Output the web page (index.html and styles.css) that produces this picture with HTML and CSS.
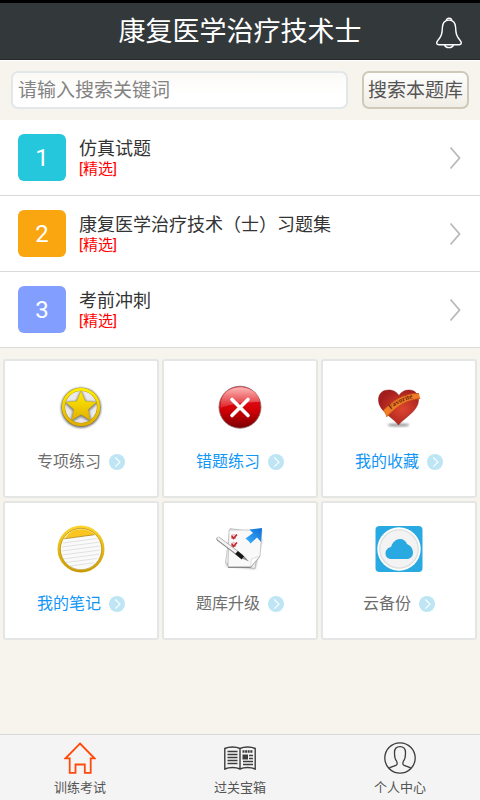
FILE: index.html
```html
<!DOCTYPE html>
<html lang="zh-CN">
<head>
<meta charset="utf-8">
<meta name="viewport" content="width=device-width, initial-scale=1">
<title>康复医学治疗技术士</title>
<link rel="stylesheet" href="styles.css">
</head>
<body>
<svg class="defs" aria-hidden="true">
  <defs>
    <linearGradient id="gold" x1="0" y1="0" x2="0" y2="1"><stop offset="0" stop-color="#fff000"/><stop offset="1" stop-color="#e2ae00"/></linearGradient>
    <linearGradient id="rim" x1="0" y1="0" x2="0" y2="1"><stop offset="0" stop-color="#ffd52e"/><stop offset="1" stop-color="#c99a00"/></linearGradient>
    <linearGradient id="red" x1="0" y1="0" x2="0" y2="1"><stop offset="0" stop-color="#e8202a"/><stop offset=".55" stop-color="#d40007"/><stop offset="1" stop-color="#7c0002"/></linearGradient>
    <linearGradient id="gloss" x1="0" y1="0" x2="0" y2="1"><stop offset="0" stop-color="#ffb5b5"/><stop offset="1" stop-color="#dc2026"/></linearGradient>
    <radialGradient id="heart" cx=".6" cy=".55" r=".6"><stop offset="0" stop-color="#dc4630"/><stop offset="1" stop-color="#a31d1c"/></radialGradient>
    <linearGradient id="blue" x1="0" y1="1" x2="1" y2="0"><stop offset="0" stop-color="#3fb0ff"/><stop offset="1" stop-color="#0c6fd4"/></linearGradient>
    <filter id="soft" x="-30%" y="-30%" width="160%" height="160%"><feGaussianBlur stdDeviation="1.3"/></filter>
    <symbol id="go" viewBox="0 0 16 16"><circle cx="8" cy="8" r="8" fill="#bde5f3"/><path d="M6.3 3.5 11 8.2 6.3 12.7" fill="none" stroke="#fff" stroke-width="1.1"/></symbol>
    <symbol id="chevron" viewBox="0 0 12 24"><path d="M1.5 1.5 10.5 12 1.5 22.5" fill="none" stroke="#b9b9b9" stroke-width="1.8"/></symbol>
  </defs>
</svg>

<header class="topbar">
  <h1 class="topbar-title">康复医学治疗技术士</h1>
  <button class="bell" type="button" aria-label="通知">
    <svg width="28" height="32" viewBox="0 0 28 32" fill="none" stroke="#fff" stroke-width="1.4">
      <path d="M14 3.1C9.8 3.1 7.6 6 7.4 10.3C7.2 16.500 6.600 19.200 3 23.200C.6 26 1.700 27.700 4 27.700H24C26.300 27.700 27.400 26 25 23.200C21.400 19.200 20.800 16.500 20.600 10.300C20.400 6 18.200 3.100 14 3.100Z"/>
      <path d="M11.300 3.500C11.300.4 16.700.4 16.700 3.500M9.500 28C10.500 31.500 17.500 31.500 18.500 28"/>
    </svg>
  </button>
</header>

<form class="search">
  <input class="search-input" type="search" placeholder="请输入搜索关键词" aria-label="请输入搜索关键词">
  <button class="search-button" type="button">搜索本题库</button>
</form>

<main>
  <ul class="list">
    <li><a class="row" href="#">
      <span class="badge badge-cyan">1</span>
      <span class="row-text"><span class="row-title">仿真试题</span><span class="row-tag">[精选]</span></span>
      <svg class="chevron"><use href="#chevron"/></svg>
    </a></li>
    <li><a class="row" href="#">
      <span class="badge badge-orange">2</span>
      <span class="row-text"><span class="row-title">康复医学治疗技术（士）习题集</span><span class="row-tag">[精选]</span></span>
      <svg class="chevron"><use href="#chevron"/></svg>
    </a></li>
    <li><a class="row" href="#">
      <span class="badge badge-violet">3</span>
      <span class="row-text"><span class="row-title">考前冲刺</span><span class="row-tag">[精选]</span></span>
      <svg class="chevron"><use href="#chevron"/></svg>
    </a></li>
  </ul>

  <div class="grid">
    <a class="card" href="#">
      <svg class="card-icon" viewBox="0 0 48 48">
        <circle cx="24" cy="24.800" r="20" fill="#444" opacity=".8" filter="url(#soft)"/>
        <circle cx="24" cy="24" r="18" fill="#e9e9ee"/>
        <path d="M24 10.500 28 19.500 38 20.500 30.500 27.300 32.700 37 24 32 15.300 37 17.500 27.300 10 20.500 20 19.500Z" fill="#333" stroke="#444" stroke-width="3" opacity=".65" filter="url(#soft)"/>
        <circle cx="24" cy="24" r="17.600" fill="none" stroke="#a98500" stroke-width="3.400"/>
        <circle cx="24" cy="24" r="17.700" fill="none" stroke="url(#gold)" stroke-width="2.800"/>
        <path d="M24 8 28.300 18.200 39.300 19.200 31 26.500 33.500 37.300 24 31.600 14.500 37.300 17 26.500 8.700 19.200 19.700 18.200Z" fill="url(#gold)" stroke="#d0a800" stroke-width=".4"/>
      </svg>
      <span class="card-label">专项练习<svg class="go"><use href="#go"/></svg></span>
    </a>
    <a class="card card-active" href="#">
      <svg class="card-icon" viewBox="0 0 48 48">
        <circle cx="24" cy="24.200" r="21" fill="url(#red)" stroke="#85686a" stroke-width=".8"/>
        <path d="M4.500 23C4.500 11 13 4.300 24 4.300S43.500 11 43.500 19C34 19 17 20 4.500 25Z" fill="url(#gloss)"/>
        <path d="M16 16.500 32 32.500M32 16.500 16 32.500" stroke="#fff" stroke-width="3.600" stroke-linecap="round"/>
      </svg>
      <span class="card-label">错题练习<svg class="go"><use href="#go"/></svg></span>
    </a>
    <a class="card card-active" href="#">
      <svg class="card-icon" viewBox="0 0 48 48">
        <ellipse cx="23.500" cy="42" rx="11" ry="1.600" fill="#555" opacity=".6" filter="url(#soft)"/>
        <path d="M23.500 42C18 34.500 3.500 28 3.500 17C3.500 10 8 7 13.500 7C19 7 22 9.500 24 12.500C26 9 29.500 7 34 7C40 7 43.500 11 43.500 17C43.500 28 29 35 23.500 42Z" fill="url(#heart)" stroke="#8d1c1a" stroke-width=".5"/>
        <path d="M8.500 27C19 17 29 10 44 10.500L45.200 15.500C31 17 22 23 11.500 34Z" fill="#f07c26"/>
        <path d="M8.500 27C19 17 29 10 44 10.500M45.200 15.500C31 17 22 23 11.500 34" fill="none" stroke="#c24e16" stroke-width=".8"/>
        <path id="ribbon" d="M15.500 26.500C22 21 28 17.500 39 15" fill="none"/>
        <text class="ribbon-text"><textPath href="#ribbon">Favorite</textPath></text>
      </svg>
      <span class="card-label">我的收藏<svg class="go"><use href="#go"/></svg></span>
    </a>
    <a class="card card-active" href="#">
      <svg class="card-icon" viewBox="0 0 48 48">
        <circle cx="24" cy="24" r="23.500" fill="url(#rim)"/>
        <circle cx="24" cy="24" r="20.400" fill="#fff3b5"/>
        <path d="M8 13.500C12 7 17 4.300 24 4.300C30 4.300 35 7 37.500 9.500L36.500 11Z" fill="#fbc51f"/>
        <path d="M7.200 13.800 37.500 9.700A20.200 20.200 0 1 1 7.200 13.800Z" fill="#fafafa"/>
        <path d="M7.200 13.800 37.500 9.700" stroke="#ad8a20" stroke-width=".8"/>
        <path d="M6 18 40 13.500M5 22 42 17.200M4.500 26 43 21M5 30 43 25M6 34 42 29.200M9 37.500 40 33.500M13 41 37 37.800" stroke="#e2e2e2" stroke-width="1"/>
        <circle cx="24" cy="24" r="20.700" fill="none" stroke="#b59124" stroke-width=".7"/>
      </svg>
      <span class="card-label">我的笔记<svg class="go"><use href="#go"/></svg></span>
    </a>
    <a class="card" href="#">
      <svg class="card-icon" viewBox="0 0 48 48">
        <path d="M10 41 39 44 46 14 18 10Z" fill="#555" opacity=".5" filter="url(#soft)"/>
        <path d="M14 3.500 44 8 39 43.500 9.500 38Z" fill="#eee" stroke="#aaa" stroke-width=".6"/>
        <path d="M13 5H46L44 31 34.500 42H12Z" fill="#f9f9f9" stroke="#b5b5b5" stroke-width=".7"/>
        <path d="M12 42.300H34.500L44 31" fill="none" stroke="#777" stroke-width="1"/>
        <path d="M34.500 42 35.500 34 44 31Z" fill="#fff" stroke="#c7c7c7" stroke-width=".6"/>
        <path d="M15.500 10h4v3.500h-4ZM15.500 18h4v3.500h-4Z" fill="#fff" stroke="#d99" stroke-width="1"/>
        <path d="M16 11 17.500 13.500 21 9.500M16 19 17.500 21.500 21 17.500" fill="none" stroke="#c5252b" stroke-width="1.600"/>
        <path d="M29.500 13.500 37 8 33.500 4.500 46 3 45 17 41 12.500 34.500 18.500 32.500 16Z" fill="url(#blue)"/>
        <path d="M2.500 14 25 31" stroke="#888" stroke-width="4.200" stroke-linecap="round"/>
        <path d="M2.500 13.600 21 27.600" stroke="#f2f2f2" stroke-width="2.800" stroke-linecap="round"/>
        <path d="M20.500 27.500 27 33" stroke="#161616" stroke-width="4"/>
        <path d="M26 33.500 28.500 31.500 33 36.500Z" fill="#888"/>
      </svg>
      <span class="card-label">题库升级<svg class="go"><use href="#go"/></svg></span>
    </a>
    <a class="card" href="#">
      <svg class="card-icon" viewBox="0 0 48 48">
        <rect x=".5" y="1" width="47" height="46" rx="4" fill="#29a9e1"/>
        <circle cx="24" cy="24" r="21.700" fill="#fff"/>
        <circle cx="24" cy="24" r="19.200" fill="#f3f3f3" stroke="#dedede" stroke-width="1.300"/>
        <path d="M16.500 34C12.500 34 10.500 31.500 10.500 28.500C10.500 25 13 22.500 16 22C17.500 17 21 14 25 14C28.500 14 31 16 32 19C35.500 20.500 38 23.500 38 27.500C38 31.500 35.500 34 31.500 34Z" fill="#29a9e1"/>
      </svg>
      <span class="card-label">云备份<svg class="go"><use href="#go"/></svg></span>
    </a>
  </div>
</main>

<nav class="tabs">
  <a class="tab" href="#">
    <svg class="tab-icon" viewBox="0 0 32 32" fill="none" stroke="#ff4b0a" stroke-width="1.800">
      <path d="M16 1.500 30.500 16.300H26.700V30.800H20.800V22.500H11.500V30.800H5.700V16.300H1.500Z"/>
    </svg>
    <span>训练考试</span>
  </a>
  <a class="tab" href="#">
    <svg class="tab-icon" viewBox="0 0 32 32" fill="none" stroke="#3c3c3c" stroke-width="1.400">
      <path d="M16 6.500C12 4.500 5 4.500.8 6.500V27C5 25 12 25 16 27C20 25 27 25 31.200 27V6.500C27 4.500 20 4.500 16 6.500ZM16 6.500V27"/>
      <path d="M3.500 9.500H13.500M3.500 12.500H13.500M3.500 15.500H13.500M3.500 18.500H13.500M3.500 21.500H13.500M25 13.500H29M25 16.500H29M19 19.500H29M19 22.500H29"/>
      <path d="M18.500 9.500H29" stroke-width="2.400" stroke-dasharray="2 .6"/>
      <path d="M18.500 12.500H24V17.500H18.500Z" fill="#3c3c3c" stroke="none"/>
    </svg>
    <span>过关宝箱</span>
  </a>
  <a class="tab" href="#">
    <svg class="tab-icon" viewBox="0 0 32 32" fill="none" stroke="#3c3c3c" stroke-width="1.300">
      <circle cx="16" cy="16" r="15.200"/>
      <path d="M5 26.500C6.500 24.500 10.500 24.500 12.500 23C13.500 22 13 20 12.500 19C10.500 17 10.500 14 10.500 10.500C10.500 6.500 12.500 4.600 16 4.600S21.500 6.500 21.500 10.500C21.500 14 21.500 17 19.500 19C19 20 18.500 22 19.500 23C21.500 24.500 25.500 24.500 27 26.500"/>
    </svg>
    <span>个人中心</span>
  </a>
</nav>
</body>
</html>
```
FILE: styles.css
```css
* {
  box-sizing: border-box;
}

body {
  margin: 0;
  min-height: 100vh;
  display: flex;
  flex-direction: column;
  background: #f7f4ed;
  color: #333;
  font-family: Roboto, "Noto Sans CJK SC", sans-serif;
}

a {
  color: inherit;
  text-decoration: none;
}

button,
input {
  font: inherit;
}

.defs {
  position: absolute;
  width: 0;
  height: 0;
}

.topbar {
  display: grid;
  grid-template-columns: 1fr auto 1fr;
  align-items: center;
  height: 60px;
  padding: 2px 17px 0;
  border-top: 3px solid #000;
  border-bottom: 1px solid #24292b;
  background: #33383b;
}

.topbar-title {
  grid-column: 2;
  margin: 0;
  color: #fff;
  font-size: 27px;
  line-height: 36px;
  font-weight: 400;
}

.bell {
  justify-self: end;
  display: block;
  padding: 2px 0 0;
  border: 0;
  background: none;
}

.bell svg {
  display: block;
}

.search {
  display: flex;
  gap: 14px;
  padding: 10px 11px 11px;
  border-top: 1px solid #fff;
}

.search-input,
.search-button {
  height: 38px;
  margin: 0;
  border-radius: 7px;
  font-size: 19px;
  line-height: 28px;
}

.search-input {
  flex: 1;
  min-width: 0;
  padding: 0 5px;
  border: 2px solid #e2e7ea;
  background: linear-gradient(#faf9f5, #fff 60%);
  appearance: none;
  outline: 0;
}

.search-input::placeholder {
  color: #838383;
  opacity: 1;
}

.search-button {
  padding: 2px 4px 0;
  border: 2px solid #cfc9b9;
  background: linear-gradient(#fdfdfc, #f1eee6);
  color: #555;
}

.list {
  margin: 0;
  padding: 0;
  list-style: none;
  background: #fff;
}

.row {
  display: flex;
  align-items: center;
  gap: 13px;
  height: 76px;
  padding: 0 19px 0 18px;
  border-bottom: 1px solid #d9d9d9;
}

.badge {
  display: grid;
  place-items: center;
  width: 48px;
  height: 47px;
  border-radius: 6px;
  color: #fff;
  font-size: 24px;
  line-height: 28px;
}

.badge-cyan {
  background: #24c7db;
}

.badge-orange {
  background: #faa611;
}

.badge-violet {
  background: #829fff;
}

.row-text {
  flex: 1;
  display: flex;
  flex-direction: column;
}

.row-title {
  font-size: 18px;
  line-height: 22px;
}

.row-tag {
  color: #f00;
  font-size: 15px;
  line-height: 18px;
}

.chevron {
  width: 12px;
  height: 24px;
}

.grid {
  display: grid;
  grid-template-columns: repeat(3, 1fr);
  gap: 3px;
  padding: 11px 3px;
}

.card {
  display: flex;
  flex-direction: column;
  align-items: center;
  gap: 19px;
  height: 139px;
  padding-top: 22px;
  border: 2px solid #e4e6e6;
  border-radius: 3px;
  background: #fff;
  color: #6e6e6e;
}

.card-active {
  color: #1196f5;
}

.card-icon {
  width: 48px;
  height: 48px;
}

.card-label {
  display: flex;
  align-items: center;
  gap: 8px;
  font-size: 16px;
  line-height: 24px;
}

.go {
  width: 16px;
  height: 16px;
}

.ribbon-text {
  fill: #6b2408;
  font-family: "Liberation Serif", serif;
  font-size: 7px;
  font-weight: 700;
}

.tabs {
  display: grid;
  grid-template-columns: repeat(3, 1fr);
  height: 66px;
  margin-top: auto;
  border-top: 1px solid #d8d8d8;
  background: #f4f4f4;
}

.tab {
  display: flex;
  flex-direction: column;
  align-items: center;
  gap: 4px;
  padding-top: 7px;
  color: #555;
  font-size: 13px;
  line-height: 20px;
}

.tab-icon {
  width: 32px;
  height: 32px;
}
```
